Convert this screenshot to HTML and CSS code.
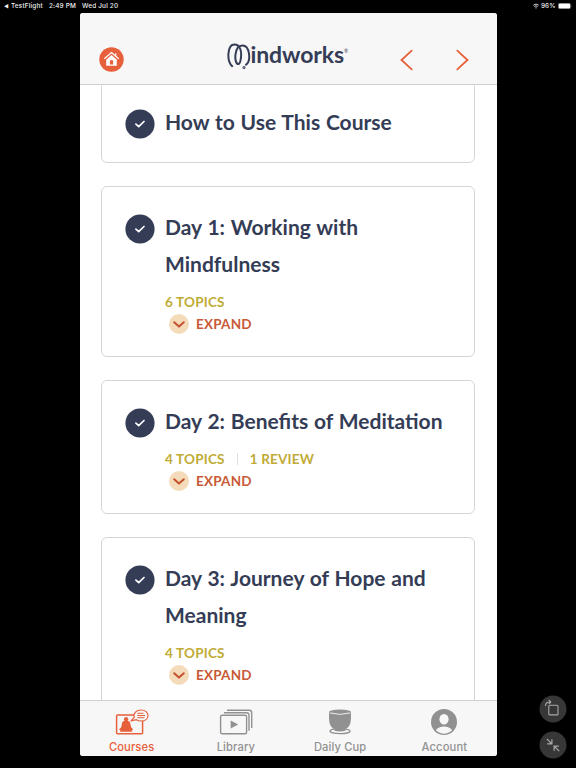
FILE: index.html
```html
<!DOCTYPE html>
<html lang="en">
<head>
    <meta charset="UTF-8">
    <meta name="viewport" content="width=device-width, initial-scale=1.0">
    <title>Mindworks - Courses</title>
    <link rel="stylesheet" href="styles.css">
</head>
<body>
    <!-- Shared icons -->
    <svg class="icon-defs" aria-hidden="true">
        <symbol id="icon-check" viewBox="0 0 30 30">
            <circle cx="15" cy="15" r="14.6" fill="#343c56"/>
            <path d="M10.9 15.1l2.8 2.5 5.3-5.1" fill="none" stroke="#fff" stroke-width="1.7" stroke-linecap="round" stroke-linejoin="round"/>
        </symbol>
        <symbol id="icon-down" viewBox="0 0 20 20">
            <circle cx="10" cy="10" r="10" fill="#f4dcba"/>
            <path d="M5.2 8.2l4.8 4.4 4.8-4.4" fill="none" stroke="#c4522e" stroke-width="2" stroke-linecap="round" stroke-linejoin="round"/>
        </symbol>
    </svg>

    <div class="status-bar">
        <div class="status-left">
            <span class="status-back">◀</span>
            <span class="status-app">TestFlight</span>
            <span class="status-time">2:49 PM</span>
            <span>Wed Jul 20</span>
        </div>
        <div class="status-right">
            <svg width="6" height="6" viewBox="0 0 6 6" fill="none" stroke="#e8e8e8"><path d="M.3 2.2q2.7-2.3 5.4 0" stroke-width=".9"/><path d="M1.3 3.5q1.7-1.4 3.4 0" stroke-width=".9"/><path d="M2.1 4.4h1.8L3 5.7z" fill="#fff" stroke="none"/></svg>
            <span>96%</span>
            <svg width="14" height="6" viewBox="0 0 14 6"><rect x=".2" y=".2" width="12.4" height="5.6" rx="1.6" fill="none" stroke="#999" stroke-width=".4"/><rect x=".6" y=".6" width="11.6" height="4.8" rx="1.2" fill="#fff"/><path d="M13 2q.9 1 0 2z" fill="#999"/></svg>
        </div>
    </div>

    <div class="app">
        <header class="app-header">
            <a class="home-btn" href="#" aria-label="Home">
                <svg width="25" height="25" viewBox="0 0 25 25">
                    <circle cx="12.5" cy="12.5" r="12.2" fill="#e7603c"/>
                    <path d="M5.3 11.8l7.2-6.2 7.2 6.2M16.8 8.5V6.2" fill="none" stroke="#fff" stroke-width="1.2"/>
                    <path d="M7.2 12.7l5.3-4.6 5.3 4.6v6H7.2z" fill="#fff"/>
                    <path d="M10.9 13.2h3.2v4.3h-3.2z" fill="#e7603c"/>
                </svg>
            </a>
            <div class="brand">
                <svg width="24" height="27" viewBox="0 0 24 27" fill="none" stroke="#343c56" stroke-width="2" stroke-linecap="round">
                    <path d="M5.2 23.2C-.6 18 .3 1.5 7.4 1.5c6.1 0 7.5 7.3 6.4 14.3-.5 3.3-1.4 5.2-2.6 5.2-4.3 0-4.5-18.5 4.3-18.5 7.2 0 8.9 15.2 3.5 19.2"/>
                    <circle cx="17" cy="24.6" r=".5"/>
                </svg>
                <span class="brand-name">indworks</span><span class="brand-mark">®</span>
            </div>
            <nav class="page-nav">
                <a href="#" aria-label="Previous"><svg width="13" height="22" viewBox="0 0 13 22"><path d="M11.7 1.7L1.5 11l10.2 9.3"/></svg></a>
                <a href="#" aria-label="Next"><svg width="13" height="22" viewBox="0 0 13 22"><path d="M1.3 1.7L11.5 11 1.3 20.3"/></svg></a>
            </nav>
        </header>

        <main class="lessons">
            <section class="card card-first">
                <svg class="check"><use href="#icon-check"/></svg>
                <div class="card-body">
                    <h2 class="card-title">How to Use This Course</h2>
                </div>
            </section>

            <section class="card">
                <svg class="check"><use href="#icon-check"/></svg>
                <div class="card-body">
                    <h2 class="card-title">Day 1: Working with<br>Mindfulness</h2>
                    <div class="meta"><span>6 TOPICS</span></div>
                    <a class="expand" href="#"><svg class="down"><use href="#icon-down"/></svg>EXPAND</a>
                </div>
            </section>

            <section class="card">
                <svg class="check"><use href="#icon-check"/></svg>
                <div class="card-body">
                    <h2 class="card-title">Day 2: Benefits of Meditation</h2>
                    <div class="meta"><span>4 TOPICS</span><span class="divider"></span><span>1 REVIEW</span></div>
                    <a class="expand" href="#"><svg class="down"><use href="#icon-down"/></svg>EXPAND</a>
                </div>
            </section>

            <section class="card">
                <svg class="check"><use href="#icon-check"/></svg>
                <div class="card-body">
                    <h2 class="card-title">Day 3: Journey of Hope and<br>Meaning</h2>
                    <div class="meta"><span>4 TOPICS</span></div>
                    <a class="expand" href="#"><svg class="down"><use href="#icon-down"/></svg>EXPAND</a>
                </div>
            </section>
        </main>

        <nav class="tab-bar">
            <a class="tab active" href="#">
                <svg width="34" height="28" viewBox="0 0 34 28">
                    <rect x="1.6" y="6.1" width="26" height="18.6" rx="1" fill="none" stroke="#e7603c" stroke-width="1.5"/>
                    <circle cx="11.1" cy="10.2" r="2.1" fill="#e7603c"/>
                    <path d="M10.2 11.3h1.8l2.9 1.7 1.3 5.2 2 2.3-1.5 1 .6 1.3H4.9l.6-1.3-1.5-1 2.2-2.3 1.1-5.2z" fill="#e7603c"/>
                    <path d="M16 12l3.3-3.6C17.9 4.200 21.500 1 26 1c4.200 0 7 2.500 7 5.400 0 3.400-3 5.600-6.900 5.600-2.200 0-3.600-.4-4.800-1.300z" fill="#f7f7f7" stroke="#e7603c" stroke-width="1.2" stroke-linejoin="round"/>
                    <path d="M22.3 4.3h6.2M22.3 6.5h7.7M22.3 8.7h7" stroke="#e7603c" stroke-width="1"/>
                </svg>
                <span>Courses</span>
            </a>
            <a class="tab" href="#">
                <svg width="34" height="28" viewBox="0 0 34 28" fill="none" stroke="#919191" stroke-width="1.4">
                    <rect x="1.6" y="6.3" width="26" height="18.4" rx="1.5"/>
                    <path d="M5 3.7h22.5q2.5 0 2.5 2.5v15.6M8 1.2h22.2q2.5 0 2.5 2.5v15.3"/>
                    <path d="M11.7 11.5v8l7.5-4z" fill="#919191" stroke="none"/>
                </svg>
                <span>Library</span>
            </a>
            <a class="tab" href="#">
                <svg width="34" height="28" viewBox="0 0 34 28">
                    <ellipse cx="17" cy="22.2" rx="10" ry="2.5" fill="none" stroke="#919191" stroke-width="1.3"/>
                    <path d="M6 3c-.1 10 0 14.2 5.600 17.300v1.400q5.400 1.600 10.800 0v-1.400C28 17.200 28.100 13 28 3z" fill="#919191"/>
                    <ellipse cx="17" cy="3" rx="11" ry="2.5" fill="#919191"/>
                    <path d="M6.6 3.9q10.4 3 20.8 0" fill="none" stroke="#f7f7f7" stroke-width=".9"/>
                </svg>
                <span>Daily Cup</span>
            </a>
            <a class="tab" href="#">
                <svg width="34" height="28" viewBox="0 0 34 28">
                    <circle cx="17" cy="13" r="13" fill="#919191"/>
                    <ellipse cx="17" cy="10.3" rx="4.6" ry="5.2" fill="#f7f7f7"/>
                    <path d="M8.900 21.300Q11.500 17.600 17 17.600t8.100 3.700Q21.500 24.700 17 24.700t-8.100-3.400z" fill="#f7f7f7"/>
                </svg>
                <span>Account</span>
            </a>
        </nav>
    </div>

    <!-- Window size controls -->
    <div class="window-controls">
        <svg width="28" height="28" viewBox="0 0 28 28" fill="none" stroke="#a8a8a8" stroke-width="1.1">
            <circle cx="14" cy="14" r="13.5" fill="#373737" stroke="none"/>
            <rect x="9.8" y="10.3" width="9.2" height="9.6" rx="1"/>
            <path d="M6.5 11q-.2-4 4.800-4M9.800 5l2 2-2 2"/>
        </svg>
        <svg width="28" height="28" viewBox="0 0 28 28" fill="none" stroke="#a8a8a8" stroke-width="1.2">
            <circle cx="14" cy="14" r="13.5" fill="#373737" stroke="none"/>
            <path d="M7.8 7.8l4.7 4.7M12.9 8.2v4.7H8.2M20.2 20.2l-4.7-4.7M15.1 19.8v-4.7h4.7"/>
        </svg>
    </div>
</body>
</html>
```

FILE: styles.css
```css
* {
    box-sizing: border-box;
}
body {
    margin: 0;
    width: 576px;
    height: 768px;
    overflow: hidden;
    background-color: #000;
    font-family: Lato, "Open Sans", sans-serif;
}
a {
    color: inherit;
    text-decoration: none;
}
svg {
    display: block;
    flex: none;
}
.icon-defs {
    position: absolute;
    width: 0;
    height: 0;
}

/* Status bar */
.status-bar {
    display: flex;
    justify-content: space-between;
    height: 12.5px;
    padding: 0 4px;
    color: #f0f0f0;
    font-family: Inter, sans-serif;
    font-size: 6.4px;
    font-weight: 500;
    line-height: 12px;
}
.status-left,
.status-right {
    display: flex;
    align-items: center;
    white-space: nowrap;
}
.status-left {
    letter-spacing: 0.19px;
}
.status-back {
    width: 7px;
    font-size: 5px;
}
.status-app,
.status-time {
    margin-right: 6px;
}
.status-right {
    gap: 2.5px;
}

/* App window */
.app {
    display: flex;
    flex-direction: column;
    width: 417px;
    height: 743px;
    margin-left: 79.5px;
    background-color: #fff;
    border-radius: 3px;
    overflow: hidden;
}
.app-header {
    display: flex;
    flex: none;
    align-items: flex-start;
    height: 72px;
    padding: 30px 27.5px 0 19px;
    background-color: #f7f7f7;
    border-bottom: 1px solid #cfcfcf;
}
.home-btn {
    margin-top: 4.5px;
}
.brand {
    display: flex;
    margin-left: 103px;
    color: #343c56;
}
.brand-name {
    font-size: 23px;
    font-weight: 700;
    line-height: 23px;
    letter-spacing: -0.1px;
}
.brand-mark {
    font-size: 5px;
    line-height: 17px;
}
.page-nav {
    display: flex;
    gap: 43px;
    margin-left: auto;
    margin-top: 6.5px;
}
.page-nav path {
    fill: none;
    stroke: #e7603c;
    stroke-width: 1.8;
    stroke-linecap: round;
}

/* Lesson cards */
.lessons {
    flex: 1;
    min-height: 0;
    padding: 0 22px 0 21.5px;
    overflow: hidden;
}
.card {
    display: flex;
    margin-bottom: 22.5px;
    padding: 21.5px 20px 21px 22.5px;
    border: 1px solid #d5d5d5;
    border-radius: 6px;
}
.card-first {
    margin-top: -4px;
    padding-bottom: 22px;
}
.check {
    width: 30px;
    height: 30px;
    margin: 6px 10.5px 0 0;
}
.card-title {
    margin: 0;
    color: #343c56;
    font-size: 21px;
    font-weight: 700;
    line-height: 37px;
    word-spacing: 0.7px;
    white-space: nowrap;
}
.meta,
.expand {
    display: flex;
    align-items: center;
    height: 22px;
    font-size: 13.5px;
    font-weight: 700;
    letter-spacing: 0.2px;
}
.meta {
    margin-top: 9px;
    color: #c0ab35;
}
.divider {
    width: 1px;
    height: 12px;
    margin: 0 12px;
    background-color: #dfe1e8;
}
.expand {
    color: #c85a37;
    padding-left: 4px;
}
.down {
    width: 20px;
    height: 20px;
    margin-right: 7px;
}

/* Bottom tabs */
.tab-bar {
    display: flex;
    flex: none;
    height: 55.5px;
    background-color: #f7f7f7;
    border-top: 1px solid #cfcfcf;
}
.tab {
    display: flex;
    flex: 1;
    flex-direction: column;
    align-items: center;
    padding-top: 8px;
    color: #919191;
    font-family: Inter, sans-serif;
    font-size: 11.2px;
    font-weight: 500;
    line-height: 20px;
    letter-spacing: 0.12px;
}
.tab.active {
    color: #e7603c;
}

/* Floating buttons over the letterbox area */
.window-controls {
    position: absolute;
    right: 9px;
    bottom: 9px;
    display: flex;
    flex-direction: column;
    gap: 8px;
}
```
